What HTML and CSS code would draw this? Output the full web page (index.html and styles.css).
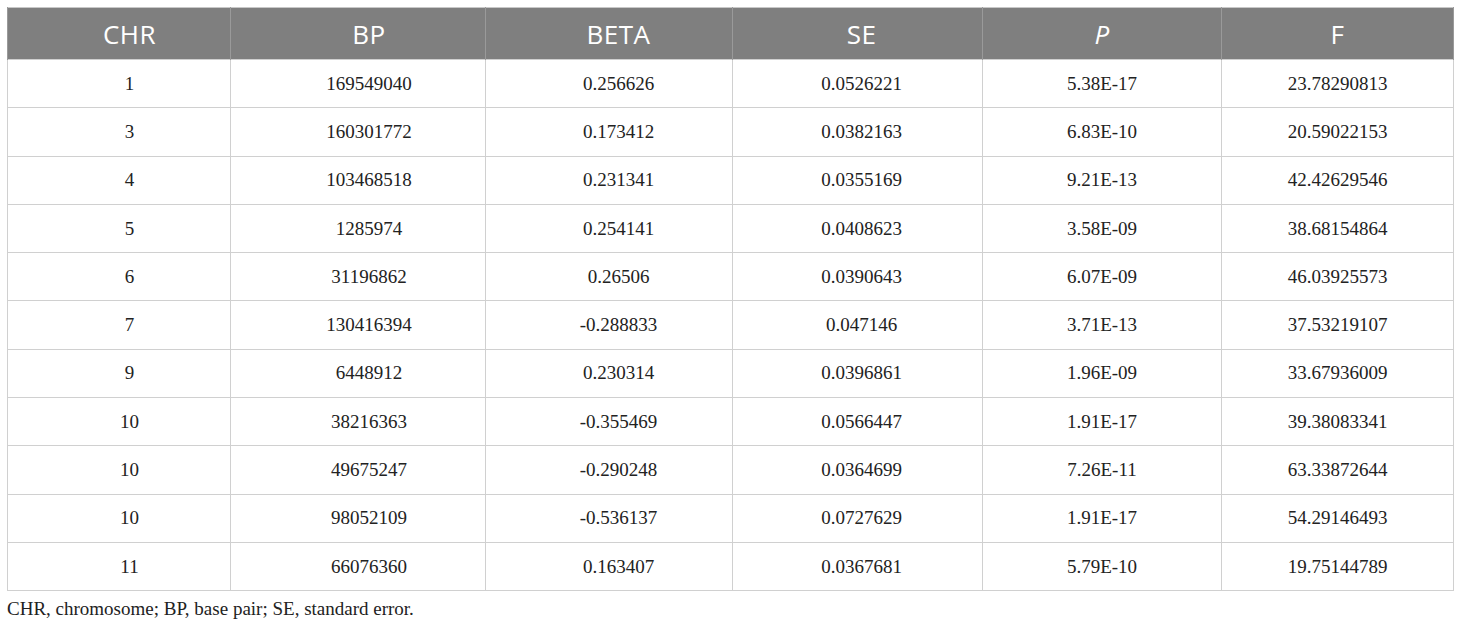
FILE: index.html
```html
<!DOCTYPE html>
<html>
<head>
<meta charset="utf-8">
<link rel="stylesheet" href="styles.css">
</head>
<body>
<div class="wrap">
<table class="data">
<colgroup>
<col class="c1"><col class="c2"><col class="c3"><col class="c4"><col class="c5"><col class="c6">
</colgroup>
<thead>
<tr><th>CHR</th><th>BP</th><th>BETA</th><th>SE</th><th><i>P</i></th><th>F</th></tr>
</thead>
<tbody>
<tr><td>1</td><td>169549040</td><td>0.256626</td><td>0.0526221</td><td>5.38E-17</td><td>23.78290813</td></tr>
<tr><td>3</td><td>160301772</td><td>0.173412</td><td>0.0382163</td><td>6.83E-10</td><td>20.59022153</td></tr>
<tr><td>4</td><td>103468518</td><td>0.231341</td><td>0.0355169</td><td>9.21E-13</td><td>42.42629546</td></tr>
<tr><td>5</td><td>1285974</td><td>0.254141</td><td>0.0408623</td><td>3.58E-09</td><td>38.68154864</td></tr>
<tr><td>6</td><td>31196862</td><td>0.26506</td><td>0.0390643</td><td>6.07E-09</td><td>46.03925573</td></tr>
<tr><td>7</td><td>130416394</td><td>-0.288833</td><td>0.047146</td><td>3.71E-13</td><td>37.53219107</td></tr>
<tr><td>9</td><td>6448912</td><td>0.230314</td><td>0.0396861</td><td>1.96E-09</td><td>33.67936009</td></tr>
<tr><td>10</td><td>38216363</td><td>-0.355469</td><td>0.0566447</td><td>1.91E-17</td><td>39.38083341</td></tr>
<tr><td>10</td><td>49675247</td><td>-0.290248</td><td>0.0364699</td><td>7.26E-11</td><td>63.33872644</td></tr>
<tr><td>10</td><td>98052109</td><td>-0.536137</td><td>0.0727629</td><td>1.91E-17</td><td>54.29146493</td></tr>
<tr><td>11</td><td>66076360</td><td>0.163407</td><td>0.0367681</td><td>5.79E-10</td><td>19.75144789</td></tr>
</tbody>
</table>
<p class="note">CHR, chromosome; BP, base pair; SE, standard error.</p>
</div>
</body>
</html>
```
FILE: styles.css
```css
html, body {
  margin: 0;
  padding: 0;
  background: #ffffff;
}
.wrap {
  padding: 7px 7px 0 7px;
}
.data {
  width: 1446px;
  border-collapse: collapse;
  table-layout: fixed;
  border: 1px solid #c8c8c8;
}
.c1 { width: 223px; }
.c2 { width: 255px; }
.c3 { width: 247px; }
.c4 { width: 250px; }
.c5 { width: 239px; }
.c6 { width: 232px; }
.data th {
  background: #7f7f7f;
  color: #ffffff;
  font-family: "Open Sans", "Noto Sans", sans-serif;
  font-weight: 400;
  font-size: 26px;
  letter-spacing: 0.5px;
  line-height: 30px;
  height: 51px;
  padding: 0;
  text-align: center;
  border-left: 1px solid #9a9a9a;
  border-right: 1px solid #9a9a9a;
}
.data td {
  font-family: "Liberation Serif", "Times New Roman", serif;
  font-size: 19px;
  line-height: 22px;
  color: #222222;
  text-align: center;
  height: 47.3px;
  padding: 0;
  border: 1px solid #d0d0d0;
}
.data th:nth-child(1), .data td:nth-child(1) { padding-left: 21px; }
.data th:nth-child(2), .data td:nth-child(2) { padding-left: 22px; }
.data th:nth-child(3), .data td:nth-child(3) { padding-left: 19px; }
.data th:nth-child(4), .data td:nth-child(4) { padding-left: 8px; }
.note {
  margin: 7px 0 0 0;
  font-family: "Liberation Serif", "Times New Roman", serif;
  font-size: 19px;
  line-height: 22px;
  color: #222222;
}
```
